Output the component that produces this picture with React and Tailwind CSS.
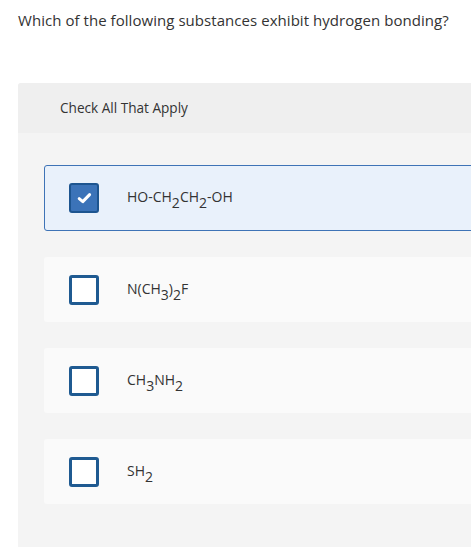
import React from "react";

const options = [
  { id: 1, checked: true, parts: ["HO-CH", ["2"], "CH", ["2"], "-OH"] },
  { id: 2, checked: false, parts: ["N(CH", ["3"], ")", ["2"], "F"] },
  { id: 3, checked: false, parts: ["CH", ["3"], "NH", ["2"]] },
  { id: 4, checked: false, parts: ["SH", ["2"]] },
];

function Formula({ parts }) {
  return (
    <span>
      {parts.map((p, i) =>
        Array.isArray(p) ? (
          <sub key={i} className="relative top-[1px] align-[-5px] text-[14px] leading-none">
            {p[0]}
          </sub>
        ) : (
          <span key={i}>{p}</span>
        )
      )}
    </span>
  );
}

function Box({ checked }) {
  if (checked) {
    return (
      <span className="flex h-[30px] w-[30px] shrink-0 items-center justify-center rounded-[3px] border-[2px] border-[#1d5590] bg-[#3b73b8]">
        <svg width="15" height="12" viewBox="0 0 15 12" fill="none">
          <path d="M2.2 6.6 L5.8 9.6 L12.6 2.6" stroke="#ffffff" strokeWidth="3" strokeLinecap="round" strokeLinejoin="round" />
        </svg>
      </span>
    );
  }
  return <span className="h-[30px] w-[30px] shrink-0 rounded-[3px] border-[3px] border-[#1f5a91] bg-white" />;
}

export default function App() {
  return (
    <div className="min-h-[547px] w-full overflow-hidden bg-white text-[#333333]" style={{ fontFamily: "'Open Sans', 'Liberation Sans', sans-serif" }}>
      <p className="pl-[18px] pt-[10px] text-[15px] leading-[20px] tracking-[0.05px]">
        Which of the following substances exhibit hydrogen bonding?
      </p>
      <div className="ml-[18px] mt-[53px] w-[760px] rounded-tl-[3px] bg-[#f4f4f4]">
        <div className="flex h-[50px] items-center rounded-tl-[3px] bg-[#efefef] pl-[42px] text-[13.6px]">
          Check All That Apply
        </div>
        <div className="flex flex-col gap-[26px] pb-[60px] pl-[26px] pt-[32px]">
          {options.map((o) => (
            <div
              key={o.id}
              className={
                o.checked
                  ? "flex h-[66px] items-center rounded-[3px] border border-[#3e73b6] bg-[#e9f1fb] pl-[24px]"
                  : "flex h-[65px] items-center rounded-[3px] bg-[#fafafa] pl-[25px]"
              }
            >
              <Box checked={o.checked} />
              <span className="ml-[28px] text-[14px] leading-[20px]">
                <Formula parts={o.parts} />
              </span>
            </div>
          ))}
        </div>
      </div>
    </div>
  );
}
